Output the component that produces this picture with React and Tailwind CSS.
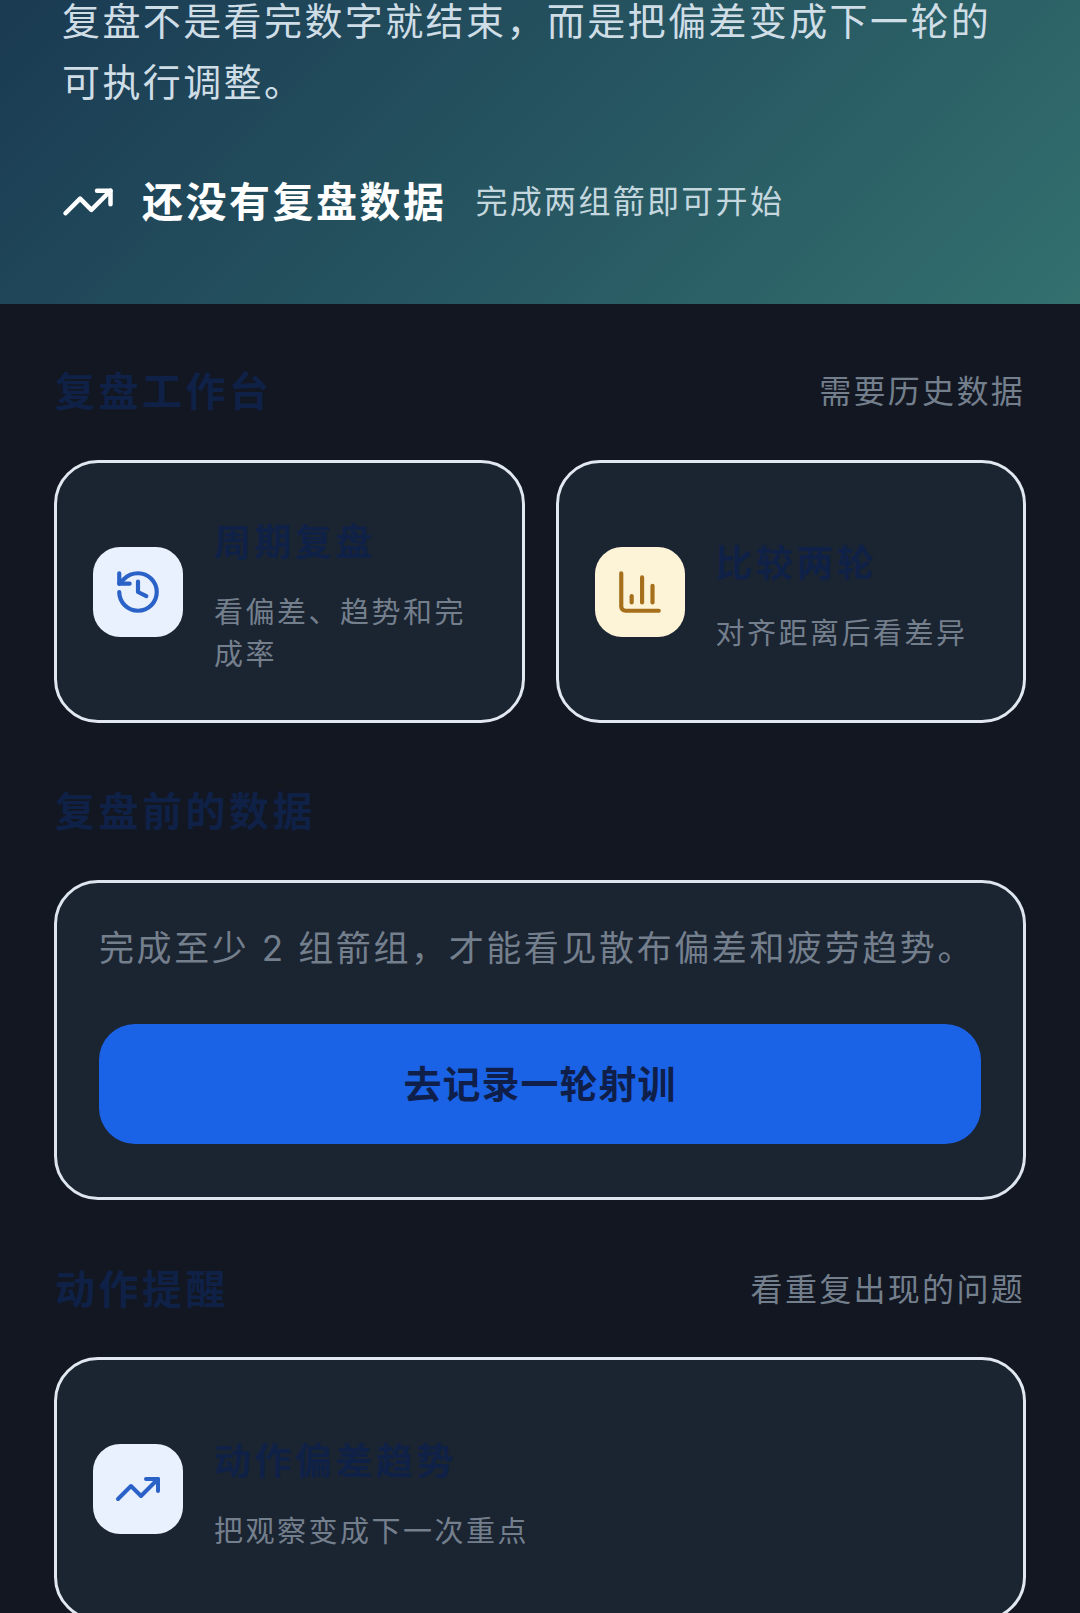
import { ChartColumn, History, TrendingUp } from "lucide-react";

function Section({ title, note, children }) {
  return (
    <section>
      <div className="flex items-center justify-between h-[44px] px-[1px]">
        <h2 className="text-[#0f2147] text-[40px] leading-[44px] font-bold tracking-[3.5px]">{title}</h2>
        {note && <span className="text-[#747f8d] text-[32px] tracking-[2.3px] leading-[44px]">{note}</span>}
      </div>
      {children}
    </section>
  );
}

function ToolCard({ Icon, size = 50, tile, stroke, title, desc, className }) {
  return (
    <div className={`flex items-center gap-[31px] px-[36px] bg-[#1b2431] border-[3px] border-[#e2e8f0] rounded-[44px] ${className}`}>
      <div className={`flex items-center justify-center w-[90px] h-[90px] shrink-0 rounded-[27px] ${tile}`}>
        <Icon size={size} strokeWidth={2} className={stroke} />
      </div>
      <div className="min-w-0 pt-[14px]">
        <h3 className="text-[#0f2147] text-[37px] leading-[44px] font-bold tracking-[3.5px]">{title}</h3>
        <p className="mt-[27px] text-[#747f8d] text-[29px] leading-[42px] tracking-[2.5px]">{desc}</p>
      </div>
    </div>
  );
}

export default function App() {
  return (
    <div className="h-[1613px] overflow-hidden bg-[#121722] font-['Inter','Noto_Sans_CJK_SC',sans-serif]">
      <header className="h-[304px] px-[62px] bg-linear-135 from-[#1a3a52] to-[#33706e]">
        <p className="flex flex-col gap-[19px] text-[#cfdde6] text-[38px] leading-[42px] tracking-[2.4px]">
          <span>复盘不是看完数字就结束，而是把偏差变成下一轮的</span>
          <span>可执行调整。</span>
        </p>
        <div className="flex items-center mt-[71px]">
          <TrendingUp size={54} strokeWidth={2} className="text-white -ml-[1px] mr-[27px]" />
          <strong className="text-white text-[41px] leading-[56px] font-bold tracking-[2.5px]">还没有复盘数据</strong>
          <span className="ml-[29px] text-[#c4d6de] text-[32px] tracking-[2.3px]">完成两组箭即可开始</span>
        </div>
      </header>

      <main className="px-[54px] pt-[66px]">
        <Section title="复盘工作台" note="需要历史数据">
          <div className="grid grid-cols-2 gap-[31px] mt-[46px]">
            <ToolCard Icon={History} tile="bg-[#eaf1fe]" stroke="text-[#2a62c8]" title="周期复盘" desc="看偏差、趋势和完成率" className="h-[263px]" />
            <ToolCard Icon={ChartColumn} tile="bg-[#fdf3d6]" stroke="text-[#a66f1c]" title="比较两轮" desc="对齐距离后看差异" className="h-[263px]" />
          </div>
        </Section>

        <div className="mt-[67px]">
          <Section title="复盘前的数据">
            <div className="mt-[46px] h-[320px] px-[42px] pt-[42px] bg-[#1b2431] border-[3px] border-[#dfe5ee] rounded-[44px]">
              <p className="text-[#747f8d] text-[35px] leading-[46px] tracking-[2.6px] whitespace-nowrap">完成至少 2 组箭组，才能看见散布偏差和疲劳趋势。</p>
              <button className="mt-[53px] w-full h-[120px] rounded-[36px] bg-[#1a62e6] text-[#0f1f4a] text-[38px] font-bold tracking-[1px]">去记录一轮射训</button>
            </div>
          </Section>
        </div>

        <div className="mt-[68px]">
          <Section title="动作提醒" note="看重复出现的问题">
            <div className="mt-[45px]">
              <ToolCard Icon={TrendingUp} size={48} tile="bg-[#eaf1fe]" stroke="text-[#2a62c8]" title="动作偏差趋势" desc="把观察变成下一次重点" className="h-[264px]" />
            </div>
          </Section>
        </div>
      </main>
    </div>
  );
}
